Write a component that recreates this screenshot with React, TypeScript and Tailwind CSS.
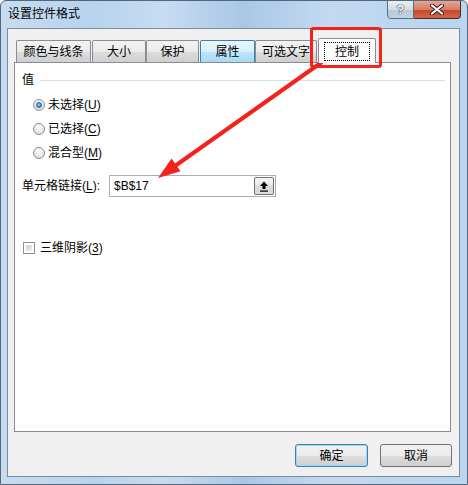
import React from "react";

const Radio = ({ checked }: { checked?: boolean }) => (
  <div className="w-[12px] h-[12px] rounded-full border border-[#8f9193] bg-[radial-gradient(circle_at_50%_35%,#ffffff,#d4d4d4)] flex items-center justify-center shrink-0">
    {checked && (
      <div className="w-[6px] h-[6px] rounded-full border border-[#1d5f95] bg-[radial-gradient(circle_at_40%_35%,#8fd0ff,#1b77c4)]" />
    )}
  </div>
);

const U = ({ children }: { children: React.ReactNode }) => <span className="underline underline-offset-2">{children}</span>;

const Tab = ({ w, label, ml, hover }: { w: number; label: string; ml: string; hover?: boolean }) => (
  <div
    className={`${ml} h-[22px] flex items-center justify-center border border-b-0 rounded-t-[2px] ${
      hover
        ? "border-[#3c7fb1] bg-[linear-gradient(#eaf6fd,#d9f0fc_50%,#bee6fd_51%,#a7d9f5)]"
        : "border-[#898c95] bg-[linear-gradient(#f2f2f2,#ebebeb_50%,#dddddd_51%,#cfcfcf)]"
    }`}
    style={{ width: w }}
  >
    {label}
  </div>
);

export default function App() {
  return (
    <div
      className="relative w-[468px] h-[485px] overflow-hidden rounded-t-[6px] border border-[#54667a] bg-[linear-gradient(90deg,#c7dcf1,#b7d3ee_20%,#c6dcf2_35%,#a9c7e5_52%,#c2d9f1_70%,#b9d5f0)] text-[12px] text-black"
      style={{ fontFamily: '"Liberation Sans","Noto Sans CJK SC",sans-serif' }}
    >
      {/* title bar */}
      <div className="h-[27px] flex items-start justify-between">
        <div className="pl-[7px] pt-[5px] leading-[16px]">设置控件格式</div>
        <div className="flex mr-[6px] -mt-px">
          <div className="w-[27px] h-[19px] rounded-bl-[4px] border border-[#5b6d80] bg-[linear-gradient(#e9eef4,#d3dce6_50%,#b9c7d6_51%,#c6d3e0)] flex items-center justify-center">
            <span className="text-white font-bold text-[13px] leading-none [text-shadow:0_0_1px_#283848,0_0_1px_#283848,0_0_1px_#283848]">?</span>
          </div>
          <div className="w-[47px] h-[19px] rounded-br-[4px] border border-l-0 border-[#4e2a23] bg-[linear-gradient(#e7a796,#d77b63_50%,#c5452a_51%,#d1664a)] flex items-center justify-center">
            <svg width="14" height="11" viewBox="0 0 14 11">
              <path d="M2 1.5 L12 9.5 M12 1.5 L2 9.5" stroke="#3a1a14" strokeWidth="4" strokeLinecap="round" />
              <path d="M2 1.5 L12 9.5 M12 1.5 L2 9.5" stroke="#ffffff" strokeWidth="2.2" strokeLinecap="round" />
            </svg>
          </div>
        </div>
      </div>

      {/* client area */}
      <div className="ml-[6px] w-[453px] h-[449px] border border-[#7f8b98] bg-[#f0f0f0] pl-[6px] pr-[8px]">
        <div className="mt-[9px] h-[24px] flex items-end pl-[2px]">
          <Tab w={75} label="颜色与线条" ml="ml-0" />
          <Tab w={54} label="大小" ml="ml-[1px]" />
          <Tab w={53} label="保护" ml="ml-0" />
          <Tab w={55} label="属性" ml="ml-[1px]" hover />
          <Tab w={62} label="可选文字" ml="ml-0" />
          <div className="relative z-10 ml-[1px] w-[58px] h-[25px] -mb-px border border-b-0 border-[#898c95] bg-white rounded-t-[2px] flex items-start justify-center pt-[3px]">
            <div className="w-[46px] h-[19px] border border-dotted border-black flex items-center justify-center">控制</div>
          </div>
        </div>

        {/* panel */}
        <div className="w-[437px] h-[370px] border border-[#898c95] bg-white pl-[7px]">
          <div className="mt-[9px] h-[16px] flex items-center leading-[16px]">
            <span>值</span>
            <div className="flex-1 ml-[6px] mr-[5px] h-px bg-[#d5dfe5]" />
          </div>
          <div className="ml-[11px] mt-[5px] flex flex-col leading-[16px]">
            <div className="h-[24px] flex items-center gap-[3px]"><Radio checked /><span>未选择(<U>U</U>)</span></div>
            <div className="h-[24px] flex items-center gap-[3px]"><Radio /><span>已选择(<U>C</U>)</span></div>
            <div className="h-[23px] flex items-center gap-[3px]"><Radio /><span>混合型(<U>M</U>)</span></div>
          </div>
          <div className="mt-[11px] h-[22px] flex items-center leading-[16px]">
            <span className="w-[87px]">单元格链接(<U>L</U>):</span>
            <div className="w-[167px] h-[22px] border border-[#abadb3] flex items-center justify-between pl-[4px] pr-px">
              <span>$B$17</span>
              <div className="w-[20px] h-[18px] rounded-[2px] border border-[#707070] bg-[linear-gradient(#f6f6f6,#e6e6e6_50%,#d8d8d8_51%,#dddddd)] flex items-center justify-center">
                <svg width="10" height="11" viewBox="0 0 10 11">
                  <path d="M5 0.5 L9 5 L6.5 5 L6.5 8 L3.5 8 L3.5 5 L1 5 Z" fill="#000" />
                  <rect x="1" y="9.5" width="8" height="1.2" fill="#000" />
                </svg>
              </div>
            </div>
          </div>
          <div className="mt-[43px] h-[16px] flex items-center gap-[5px] ml-[1px] leading-[16px]">
            <div className="w-[12px] h-[12px] border border-[#8f8f8f] bg-white p-[2px]">
              <div className="w-full h-full bg-[linear-gradient(135deg,#cbcbcb,#f4f4f4)]" />
            </div>
            <span>三维阴影(<U>3</U>)</span>
          </div>
        </div>

        {/* buttons */}
        <div className="mt-[12px] flex justify-end gap-[12px] -mr-px">
          <div className="w-[73px] h-[23px] rounded-[3px] border border-[#3c7fb1] shadow-[inset_0_0_0_1px_#9fd9f8] bg-[linear-gradient(#f2f2f2,#ebebeb_50%,#dddddd_51%,#cfcfcf)] flex items-center justify-center">确定</div>
          <div className="w-[72px] h-[23px] rounded-[3px] border border-[#707070] bg-[linear-gradient(#f2f2f2,#ebebeb_50%,#dddddd_51%,#cfcfcf)] flex items-center justify-center">取消</div>
        </div>
      </div>

      {/* annotation overlay */}
      <svg className="absolute left-[-1px] top-[-1px] pointer-events-none" width="468" height="485" viewBox="0 0 468 485">
        <rect x="311.5" y="28.5" width="69" height="38" rx="2" fill="none" stroke="#f3221c" strokeWidth="3" />
        <line x1="322" y1="62" x2="170" y2="169.5" stroke="#f3221c" strokeWidth="4" />
        <path d="M158 178 L180.5 171.2 L171.6 158.6 Z" fill="#f3221c" />
      </svg>
    </div>
  );
}
